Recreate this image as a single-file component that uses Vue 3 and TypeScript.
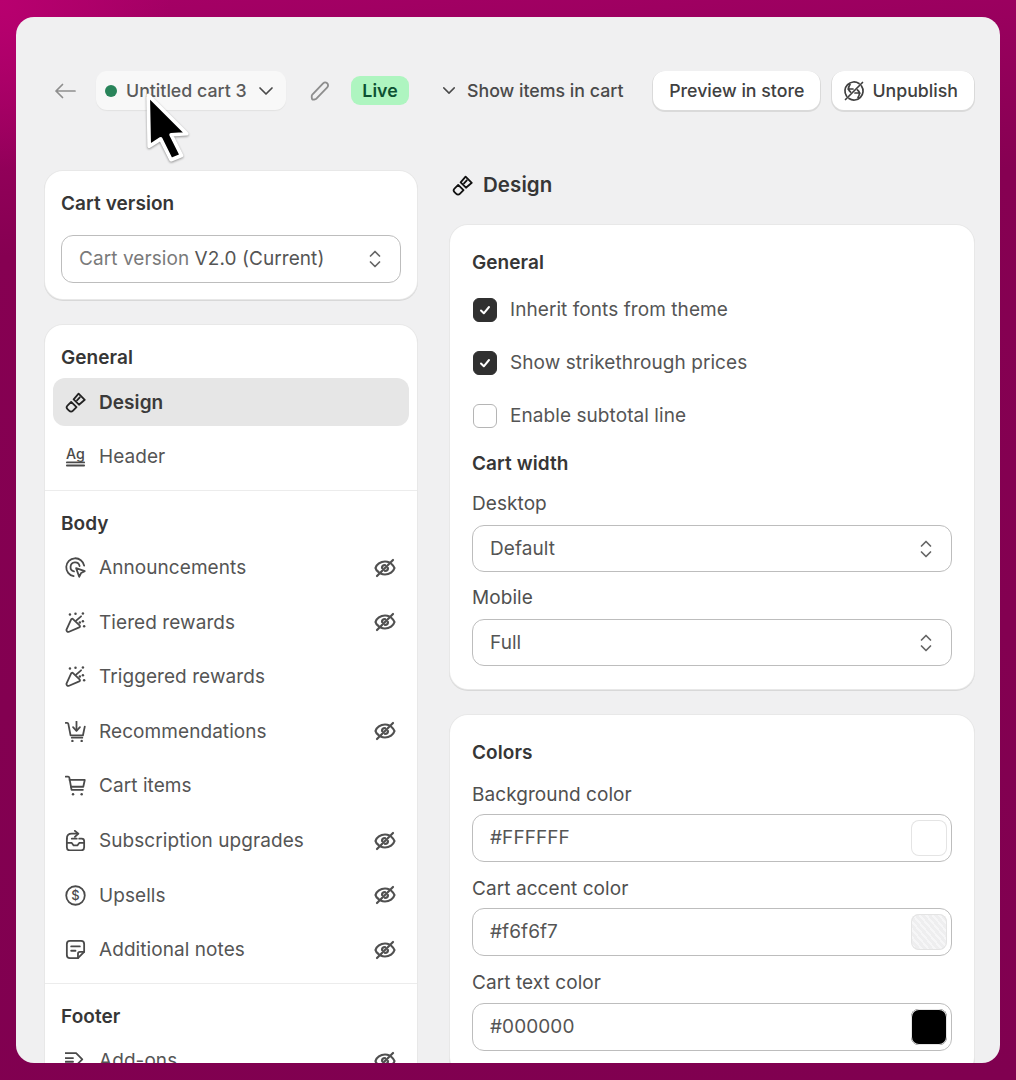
<script setup lang="ts">
interface Icon { paths: string[]; dots?: number[][]; label?: string; labelSize?: number; labelY?: number }
interface NavRow { name: string; icon: Icon; hidden?: boolean; active?: boolean }
interface NavSection { title: string; rows: NavRow[] }

const brush: Icon = { paths: [
  'M8.500 7.500 12.500 2.800 17.500 7.800 12.800 11.800Z',
  'M6.500 9.500 10.800 13.800 7.800 16.800C7 17.600 5.800 17.600 5 16.800L3.500 15.300C2.700 14.500 2.700 13.300 3.500 12.500Z',
  'M13.500 5.800 11.200 8.300',
] }
const confetti: Icon = {
  paths: ['M6.500 7.500 2.800 15.500c-.5 1.300.7 2.500 2 2L13 14c.7-.3.8-1.100.3-1.600L8 7.200c-.4-.4-1.200-.3-1.500.3Z', 'M10.500 8.500 14.500 5'],
  dots: [[5.500, 3.500], [10, 3], [16, 2.800], [16, 9], [17, 13], [13.500, 10]],
}
const icons: Record<string, Icon> = {
  header: { paths: ['M3 14.800H17', 'M3 17.300H17'], label: 'Ag', labelSize: 11.500, labelY: 12 },
  announce: { paths: [
    'M8.500 17A7.300 7.300 0 1 1 17 8.500',
    'M8.800 13.200A3.700 3.700 0 1 1 13.300 8.800',
    'M10.500 10.500 17.500 13 14.500 14.500 13 17.500Z',
  ] },
  confetti,
  cartDown: { paths: ['M2 3H3.200c.5 0 .9.3 1 .8L6 13.200H16L17.500 6', 'M7 15H15.500', 'M10.800 2V9', 'M8 6.500 10.800 9.500 13.600 6.500'], dots: [[7.500, 17.600], [15, 17.600]] },
  cart: { paths: ['M2 2.800H4c.5 0 .9.3 1 .8L6.800 13.500H16', 'M5.200 5.500H17.500L16.300 11H6.300'], dots: [[8, 17], [15, 17]] },
  subscription: { paths: ['M3 8.500V15.500C3 16.900 4.100 18 5.500 18H14.500C15.900 18 17 16.900 17 15.500V10.500C17 9.400 16.100 8.500 15 8.500H13', 'M3 12H7L8.500 14H11.500L13 12H17', 'M3 8.500C3 5.500 4.500 4.500 7 4.500H12', 'M9.500 2.200 12.300 4.500 9.500 7', 'M7 8.500H11'] },
  upsell: { paths: ['M10 2.500A7.500 7.500 0 1 1 10 17.500 7.500 7.500 0 0 1 10 2.500Z'], label: '$', labelSize: 10.500, labelY: 13.800 },
  notes: { paths: ['M17 12V5.500C17 4.100 15.900 3 14.500 3H5.500C4.100 3 3 4.100 3 5.500V14.500C3 15.900 4.100 17 5.500 17H12Z', 'M12 17V13.500C12 12.700 12.700 12 13.500 12H17', 'M6.500 7.500H13.500', 'M6.500 11H10'] },
  addons: { paths: ['M2 4H10.500L15.500 9 10.500 14H2', 'M2 8H8', 'M2 11H8'] },
}
const sections: NavSection[] = [
  { title: 'General', rows: [
    { name: 'Design', icon: brush, active: true },
    { name: 'Header', icon: icons.header },
  ] },
  { title: 'Body', rows: [
    { name: 'Announcements', icon: icons.announce, hidden: true },
    { name: 'Tiered rewards', icon: icons.confetti, hidden: true },
    { name: 'Triggered rewards', icon: icons.confetti },
    { name: 'Recommendations', icon: icons.cartDown, hidden: true },
    { name: 'Cart items', icon: icons.cart },
    { name: 'Subscription upgrades', icon: icons.subscription, hidden: true },
    { name: 'Upsells', icon: icons.upsell, hidden: true },
    { name: 'Additional notes', icon: icons.notes, hidden: true },
  ] },
  { title: 'Footer', rows: [{ name: 'Add-ons', icon: icons.addons, hidden: true }] },
]
const checks = [
  { label: 'Inherit fonts from theme', on: true },
  { label: 'Show strikethrough prices', on: true },
  { label: 'Enable subtotal line', on: false },
]
const widths = [{ label: 'Desktop', value: 'Default' }, { label: 'Mobile', value: 'Full' }]
const colors = [
  { label: 'Background color', value: '#FFFFFF', swatch: '#ffffff' },
  { label: 'Cart accent color', value: '#f6f6f7', swatch: 'repeating-linear-gradient(50deg, #eeeeef 0 3px, #f6f6f7 3px 5px)' },
  { label: 'Cart text color', value: '#000000', swatch: '#000000' },
]
</script>

<template>
  <div class="window">
    <header class="topbar">
      <svg class="back" viewBox="0 0 22 16" width="22" height="16"><path d="M21 8H2M8.500 1.500 2 8l6.500 6.500" /></svg>
      <button class="pill">
        <span class="dot"></span>
        <span>Untitled cart 3</span>
        <svg class="pill-chev" viewBox="0 0 16 10" width="16" height="10"><path d="M2 2l6 6 6-6" /></svg>
      </button>
      <svg class="pencil" viewBox="0 0 20 20" width="22" height="22"><path d="M2.800 13.600 12.800 3.100c1-1 2.600-1.100 3.700-.1 1.100 1 1.100 2.700.1 3.700L6.500 17.100c-.6.6-3 1-3.500.5-.5-.5-.8-3.400-.2-4Z" /></svg>
      <span class="live">Live</span>
      <button class="show">
        <svg viewBox="0 0 16 10" width="14" height="9"><path d="M2 2l6 6 6-6" /></svg>
        <span>Show items in cart</span>
      </button>
      <button class="action push">Preview in store</button>
      <button class="action unpublish">
        <svg viewBox="0 0 24 24" width="24" height="24"><path d="M4.500 17A9 9 0 0 1 17 4.500M19.500 7A9 9 0 0 1 7 19.500M3.500 20.500 20.500 3.500M8 5.500c-2 3-1.500 6 .5 7.500M16 18.500c2-3 1.500-6-.5-7.500M6 10h5M13 14h5" /></svg>
        <span>Unpublish</span>
      </button>
    </header>

    <main class="columns">
      <aside class="side">
        <section class="card version">
          <h3>Cart version</h3>
          <div class="field version-field">
            <span><span class="muted">Cart version</span> V2.0 (Current)</span>
            <svg class="updown" viewBox="0 0 14 20" width="14" height="20"><path d="M2.500 7 7 2.500 11.500 7M2.500 13 7 17.500 11.500 13" /></svg>
          </div>
        </section>
        <nav class="card nav">
          <div v-for="s in sections" :key="s.title" class="nav-section">
            <h3>{{ s.title }}</h3>
            <div class="rows">
              <div v-for="r in s.rows" :key="r.name" class="row" :class="{ active: r.active }">
                <svg class="nav-icon" viewBox="1.500 1.500 17 17" width="21" height="21">
                  <path v-for="p in r.icon.paths" :key="p" :d="p" />
                  <circle v-for="d in r.icon.dots" :key="d.join()" :cx="d[0]" :cy="d[1]" r="1" class="fill" />
                  <text v-if="r.icon.label" x="10" :y="r.icon.labelY" text-anchor="middle" :font-size="r.icon.labelSize" class="icon-label">{{ r.icon.label }}</text>
                </svg>
                <span class="row-name">{{ r.name }}</span>
                <svg v-if="r.hidden" class="eye" viewBox="0 0 24 24" width="24" height="24">
                  <path d="M5.500 16C3.800 14.800 2.800 13.300 2.500 12 3.500 8.500 7.500 5.500 12 5.500c1.600 0 3 .3 4.300 1M18.500 8C20 9.200 21 10.600 21.500 12c-1 3.500-5 6.500-9.500 6.500-1.600 0-3-.3-4.300-1M4 20 20 4M9 12a3 3 0 0 1 3-3M15 12a3 3 0 0 1-3 3" />
                </svg>
              </div>
            </div>
          </div>
        </nav>
      </aside>

      <div class="content">
        <h2 class="title">
          <svg class="title-icon" viewBox="1.500 1.500 17 17" width="21" height="21"><path v-for="p in brush.paths" :key="p" :d="p" /></svg>
          Design
        </h2>
        <section class="card general">
          <h3>General</h3>
          <div class="checks">
            <label v-for="c in checks" :key="c.label" class="check">
              <span class="box" :class="{ on: c.on }">
                <svg v-if="c.on" viewBox="0 0 14 14" width="14" height="14"><path d="M3 7.500 5.800 10.300 11 4" /></svg>
              </span>
              {{ c.label }}
            </label>
          </div>
          <h3 class="width-title">Cart width</h3>
          <div v-for="w in widths" :key="w.label" class="group">
            <div class="label">{{ w.label }}</div>
            <div class="field select">
              <span>{{ w.value }}</span>
              <svg class="updown" viewBox="0 0 14 20" width="14" height="20"><path d="M2.500 7 7 2.500 11.500 7M2.500 13 7 17.500 11.500 13" /></svg>
            </div>
          </div>
        </section>
        <section class="card colors">
          <h3>Colors</h3>
          <div v-for="c in colors" :key="c.label" class="group color-group">
            <div class="label">{{ c.label }}</div>
            <div class="field color">
              <span>{{ c.value }}</span>
              <span class="swatch" :style="{ background: c.swatch }"></span>
            </div>
          </div>
        </section>
      </div>
    </main>

    <svg class="cursor" viewBox="0 0 48 74" width="50" height="77">
      <path d="M4 5 41 42 26 43 36 63 26 67 16 47 5 54Z" />
    </svg>
  </div>
</template>

<style scoped>
.window {
  position: relative;
  margin: 17px 16px;
  height: 1046px;
  width: 984px;
  box-sizing: border-box;
  padding: 54px 26px 0 29px;
  border-radius: 18px;
  overflow: hidden;
  background: #f0f0f1;
  font-family: Inter, "Liberation Sans", sans-serif;
  font-size: 18px;
  line-height: 24px;
  color: #444;
}
button { font: inherit; color: inherit; border: 0; padding: 0; background: none; }
h2, h3 { margin: 0; line-height: 24px; font-weight: 600; color: #363636; }
svg path { fill: none; stroke: currentColor; stroke-width: 1.700; stroke-linecap: round; stroke-linejoin: round; }

.topbar { display: flex; align-items: center; height: 39px; font-size: 17.750px; }
.back { margin-left: 9px; color: #8e8e8e; flex: none; }
.pill {
  margin-left: 20px; width: 190px; height: 39px; box-sizing: border-box; flex: none;
  display: flex; align-items: center; gap: 9px; padding-left: 9px;
  border-radius: 11px; background: #f8f8f8; font-weight: 500; color: #5a5a5a;
  box-shadow: 0 1px 1px #e2e2e2;
}
.dot { width: 12px; height: 12px; border-radius: 50%; background: #29845a; }
.pill-chev { color: #4a4a4a; margin-left: 2px; }
.pencil { margin-left: 23px; color: #8e8e8e; flex: none; }
.live {
  margin-left: 20px; width: 58px; height: 29px; border-radius: 9px; background: #aef5c0; flex: none;
  display: flex; align-items: center; justify-content: center; font-weight: 600; color: #0c5132;
}
.show { margin-left: 33px; display: flex; align-items: center; gap: 11px; font-weight: 500; color: #4a4a4a; white-space: nowrap; }
.action {
  height: 39px; box-sizing: border-box; padding: 0 16px; border-radius: 12px; background: #fff; white-space: nowrap;
  font-weight: 500; color: #404040; box-shadow: 0 1px 0 1px #dadada;
}
.push { margin-left: auto; }
.unpublish { margin-left: 12px; display: flex; align-items: center; gap: 6px; padding-left: 10px; }

.columns { display: grid; grid-template-columns: 372px 524px; gap: 33px; margin-top: 61px; font-size: 19px; letter-spacing: .07px; }
.columns h3 { font-size: 19px; }
.side { display: flex; flex-direction: column; gap: 26px; }
.card {
  background: #fff; border-radius: 18px;
  box-shadow: 0 0 0 1px #e8e8e8, 0 1px 0 1px #d8d8d8;
}
.version { padding: 20px 16px 16px; height: 128px; box-sizing: border-box; }
.version h3 { padding-top: 1px; margin-bottom: -1px; }
.field {
  display: flex; align-items: center; justify-content: space-between; box-sizing: border-box;
  border: 1px solid #bdbdbd; border-radius: 12px; background: #fff; color: #555;
}
.version-field { margin-top: 20px; height: 48px; padding: 0 18px 0 17px; }
.muted { color: #7a7a7a; }
.updown { color: #666; }

.nav-section { padding: 20px 8px 9px; border-bottom: 1px solid #ececec; }
.nav-section:last-child { border-bottom: 0; }
.nav-section h3 { padding-left: 8px; padding-top: 1px; margin-bottom: -1px; }
.rows { display: flex; flex-direction: column; gap: 6.600px; margin-top: 9px; }
.row { height: 48px; display: flex; align-items: center; padding: 0 12px; border-radius: 12px; color: #555; }
.row.active { background: #e6e6e6; font-weight: 600; color: #3a3a3a; }
.nav-icon { flex: none; color: #4a4a4a; }
.nav-icon path { stroke-width: 1.450; }
.row.active .nav-icon { color: #222; }
.row-name { margin-left: 13px; flex: 1; padding-top: 1px; }
.eye { color: #505050; }
.eye path { stroke-width: 2.200; }
.fill { fill: currentColor; stroke: none; }
.icon-label { fill: currentColor; font-family: Inter, sans-serif; font-weight: 500; letter-spacing: 0; }

.content { display: flex; flex-direction: column; }
.title { display: flex; align-items: center; gap: 10px; height: 28px; font-size: 20.500px; margin-bottom: 26px; }
.title-icon { color: #111; margin-left: 2px; }
.title-icon path { stroke-width: 1.450; }
.general { padding: 26px 22px 23px; }
.checks { display: flex; flex-direction: column; gap: 29px; margin-top: 23px; }
.check { display: flex; align-items: center; gap: 13px; height: 24px; color: #555; }
.box {
  width: 24px; height: 24px; margin-left: 1px; box-sizing: border-box; border-radius: 6px; border: 1px solid #b5b5b5;
  display: flex; align-items: center; justify-content: center; background: #fff;
}
.box.on { background: #303030; border-color: #303030; color: #fff; }
.box.on path { stroke-width: 2; }
.width-title { margin-top: 24px; }
.label { color: #505050; }
.group { margin-top: 14px; }
.width-title + .group { margin-top: 16px; }
.select { margin-top: 9px; height: 47px; padding: 0 18px 0 17px; }
.colors { margin-top: 26px; padding: 26px 22px 24px; }
.color-group { margin-top: 15px; }
.colors h3 + .color-group { margin-top: 18px; }
.color { margin-top: 7px; height: 48px; padding: 0 4px 0 17px; }
.color-group:last-child .color { margin-top: 8px; }
.swatch {
  width: 36px; height: 36px; border-radius: 8px; box-shadow: inset 0 0 0 1px #e4e4e4;
}
.cursor {
  position: absolute; left: 128px; top: 73px;
  filter: drop-shadow(0 1px 1px rgba(0,0,0,.4));
}
.cursor path { fill: #000; stroke: #fff; stroke-width: 3.500; stroke-linejoin: round; }
</style>

<style>
html, body {
  margin: 0; height: 1080px; overflow: hidden;
  background: radial-gradient(circle at 0 0, #b8006f 0, rgba(184, 0, 111, 0) 170px), linear-gradient(175deg, #a60066 0, #860052 22%, #800050 100%);
}
#app { height: 1080px; overflow: hidden; }
</style>
